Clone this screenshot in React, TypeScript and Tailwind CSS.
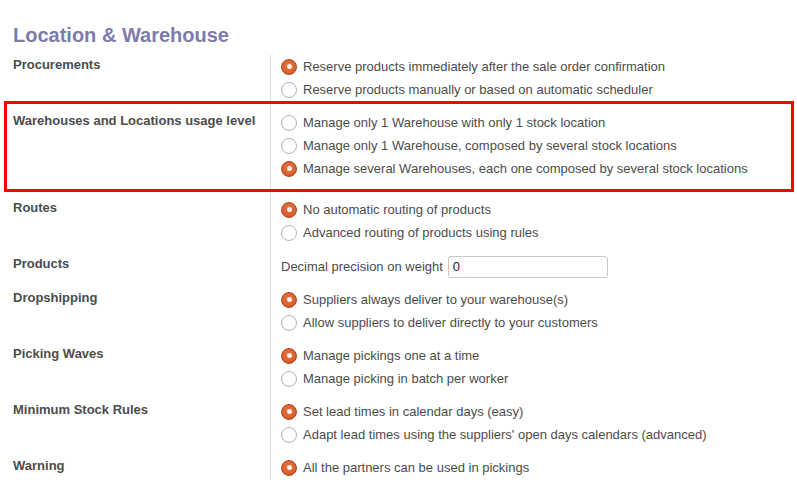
import { ReactNode } from "react";

type Row = {
  label: string;
  options?: { text: string; checked?: boolean }[];
  custom?: ReactNode;
  boxed?: boolean;
};

const Radio = ({ checked }: { checked?: boolean }) =>
  checked ? (
    <span className="flex h-[16px] w-[16px] shrink-0 items-center justify-center rounded-full border border-[#b0461c] bg-[radial-gradient(circle_at_50%_40%,#ea7640,#cc5324)]">
      <span className="h-[5px] w-[5px] rounded-full bg-[#fbeee8]" />
    </span>
  ) : (
    <span className="h-[16px] w-[16px] shrink-0 rounded-full border border-[#b3b3b3] bg-white" />
  );

const rows: Row[] = [
  {
    label: "Procurements",
    options: [
      { text: "Reserve products immediately after the sale order confirmation", checked: true },
      { text: "Reserve products manually or based on automatic scheduler" },
    ],
  },
  {
    label: "Warehouses and Locations usage level",
    boxed: true,
    options: [
      { text: "Manage only 1 Warehouse with only 1 stock location" },
      { text: "Manage only 1 Warehouse, composed by several stock locations" },
      { text: "Manage several Warehouses, each one composed by several stock locations", checked: true },
    ],
  },
  {
    label: "Routes",
    options: [
      { text: "No automatic routing of products", checked: true },
      { text: "Advanced routing of products using rules" },
    ],
  },
  {
    label: "Products",
    custom: (
      <div className="flex items-center pt-[2px]">
        <span>Decimal precision on weight</span>
        <div className="ml-[5px] flex h-[22px] w-[160px] items-center rounded-[3px] border border-[#c8c8c8] px-[4px] text-[#222]">
          0
        </div>
      </div>
    ),
  },
  {
    label: "Dropshipping",
    options: [
      { text: "Suppliers always deliver to your warehouse(s)", checked: true },
      { text: "Allow suppliers to deliver directly to your customers" },
    ],
  },
  {
    label: "Picking Waves",
    options: [
      { text: "Manage pickings one at a time", checked: true },
      { text: "Manage picking in batch per worker" },
    ],
  },
  {
    label: "Minimum Stock Rules",
    options: [
      { text: "Set lead times in calendar days (easy)", checked: true },
      { text: "Adapt lead times using the suppliers' open days calendars (advanced)" },
    ],
  },
  {
    label: "Warning",
    options: [{ text: "All the partners can be used in pickings", checked: true }],
  },
];

export default function App() {
  return (
    <div className="h-[480px] overflow-hidden bg-white font-['Liberation_Sans',Arial,sans-serif] text-[13px] text-[#4c4c4c]">
      <h1 className="pt-[23px] pl-[13px] pb-[8px] text-[20px] font-bold leading-[24px] text-[#7c7bad]">
        Location &amp; Warehouse
      </h1>
      <div>
        {rows.map((row) => (
          <div key={row.label} className="relative flex">
            <div className="w-[270px] shrink-0 pt-[1px] pl-[13px] font-bold leading-[18px]">{row.label}</div>
            <div
              className={
                "flex-1 border-l border-[#dcdcdc] pl-[10px] " + (row.boxed ? "pb-[18px]" : "pb-[10px]")
              }
            >
              {row.custom}
              {row.options?.map((o) => (
                <div key={o.text} className="flex h-[23px] items-center gap-[6px] whitespace-nowrap">
                  <Radio checked={o.checked} />
                  <span>{o.text}</span>
                </div>
              ))}
            </div>
            {row.boxed && (
              <div className="pointer-events-none absolute top-[-10px] bottom-[6px] left-[4px] w-[790px] border-[3px] border-[#ff0000]" />
            )}
          </div>
        ))}
      </div>
    </div>
  );
}
